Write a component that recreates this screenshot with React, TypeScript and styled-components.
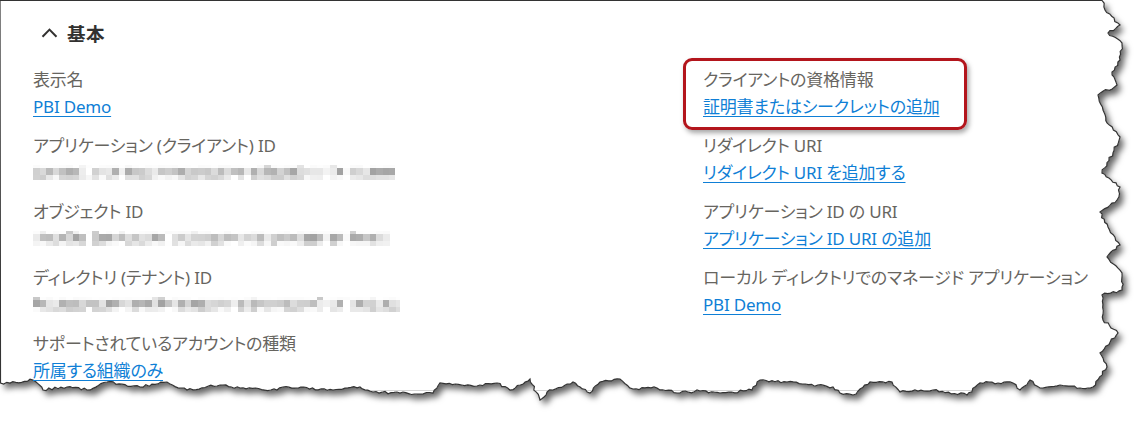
import React from 'react'
import styled, {createGlobalStyle} from 'styled-components'

const GlobalStyle = createGlobalStyle`
  html, body {
    margin: 0;
    padding: 0;
    background: #ffffff;
  }
  body {
    font-family: "Noto Sans", "Noto Sans CJK JP", sans-serif;
  }
`

// seeded random so the torn edge and mosaics stay the same every render
const makeRandom = (seed: number) => () => {
  seed = (seed * 16807) % 2147483647
  return (seed - 1) / 2147483646
}

const edgePoints: [number, number][] = [
  [0, 0.5], [1102, 0.5], [1105, 10], [1120, 25], [1108, 33], [1122, 43], [1120, 60], [1112, 72],
  [1117, 85], [1098, 95], [1103, 110], [1107, 123], [1120, 137], [1113, 153], [1102, 173],
  [1120, 187], [1117, 200], [1100, 212], [1108, 227], [1120, 245], [1107, 257], [1122, 273],
  [1122, 290], [1102, 295], [1103, 320], [1118, 333], [1100, 353], [1107, 367], [1093, 387],
  [1088, 388], [1080, 388], [1060, 385], [1040, 388], [1030, 380], [1020, 390], [1013, 383],
  [980, 383], [967, 395], [933, 390], [900, 392], [892, 382], [870, 382], [853, 395], [840, 393],
  [833, 387], [787, 382], [760, 380], [752, 390], [720, 393], [700, 391], [677, 393], [657, 388],
  [633, 389], [620, 379], [600, 382], [590, 393], [573, 382], [547, 392], [540, 400], [530, 379],
  [510, 390], [497, 383], [477, 386], [440, 383], [433, 393], [420, 394], [400, 393], [373, 392],
  [360, 387], [333, 390], [283, 387], [277, 390], [240, 388], [220, 385], [187, 390], [167, 382],
  [140, 387], [107, 382], [87, 390], [67, 387], [43, 390], [33, 380], [10, 383], [0.5, 383],
]

const buildTornPath = () => {
  const rnd = makeRandom(42)
  const out: string[] = [`M${edgePoints[0][0]},${edgePoints[0][1]}`, `L${edgePoints[1][0]},${edgePoints[1][1]}`]
  for (let i = 1; i < edgePoints.length - 1; i++) {
    const [x1, y1] = edgePoints[i]
    const [x2, y2] = edgePoints[i + 1]
    const len = Math.hypot(x2 - x1, y2 - y1)
    const steps = Math.max(1, Math.round(len / 3))
    const nx = -(y2 - y1) / (len || 1)
    const ny = (x2 - x1) / (len || 1)
    for (let s = 1; s <= steps; s++) {
      const t = s / steps
      const j = s === steps ? 0 : (rnd() - 0.5) * 2.6
      out.push(`L${(x1 + (x2 - x1) * t + nx * j).toFixed(1)},${(y1 + (y2 - y1) * t + ny * j).toFixed(1)}`)
    }
  }
  out.push('Z')
  return out.join(' ')
}

const tornPath = buildTornPath()

const Screen = styled.div`
  position: relative;
  width: 1145px;
  height: 421px;
  overflow: hidden;
  background: #ffffff;
`

const PaperShape = styled.svg`
  position: absolute;
  left: 0;
  top: 0;
  z-index: 0;
`

const Content = styled.div`
  position: relative;
  z-index: 1;
  padding: 20px 0 0 33px;
`

const SectionHeader = styled.div`
  display: flex;
  align-items: center;
  gap: 9px;
  height: 26px;
  margin-left: 8px;
  font-family: "Noto Sans CJK JP", sans-serif;
  font-size: 18.5px;
  font-weight: 700;
  color: #323130;
  letter-spacing: 0.6px;
`

const Columns = styled.div`
  display: grid;
  grid-template-columns: 670px 1fr;
  margin-top: 20px;
`

const Column = styled.div`
  display: flex;
  flex-direction: column;
  gap: 12px;
`

const Field = styled.div<{$highlighted?: boolean}>`
  position: relative;
  width: fit-content;
  display: flex;
  flex-direction: column;

  ${p => p.$highlighted && `
    &::before {
      content: '';
      position: absolute;
      top: -8px;
      bottom: -10px;
      left: -20px;
      right: -28px;
      border: 3px solid #b3151c;
      border-radius: 9px;
      box-shadow: 2px 3px 5px rgba(0, 0, 0, 0.35);
      pointer-events: none;
    }
  `}
`

const Label = styled.div`
  font-size: 17px;
  line-height: 27px;
  color: #67655f;
  letter-spacing: -0.2px;
  font-feature-settings: "palt";
  white-space: nowrap;
`

const Link = styled.a`
  font-size: 17px;
  line-height: 27px;
  color: #0f7fd6;
  letter-spacing: -0.2px;
  text-decoration: underline;
  text-underline-offset: 3px;
  text-decoration-thickness: 1px;
  font-feature-settings: "palt";
  white-space: nowrap;
  cursor: pointer;
`

const MaskedValue = styled.div`
  height: 27px;
  display: flex;
  align-items: center;
`

const ChevronUp = () => (
  <svg width="17" height="10" viewBox="0 0 17 10">
    <path d="M1.5 8.8 L8.5 1.6 L15.5 8.8" fill="none" stroke="#323130" strokeWidth="2" />
  </svg>
)

// pixelated (blurred) GUID
const Mosaic = ({seed, width}: {seed: number; width: number}) => {
  const rnd = makeRandom(seed)
  const cell = 6.6
  const cols = Math.round(width / cell)
  const rows = [
    {y: 0, h: 3, lo: 200, hi: 255, sparse: true},
    {y: 3, h: 7, lo: 160, hi: 238, sparse: false},
    {y: 10, h: 5, lo: 205, hi: 250, sparse: false},
  ]
  const rects: React.ReactNode[] = []
  rows.forEach((r, ri) => {
    for (let c = 0; c < cols; c++) {
      const gap = c % 12 === 8 || c % 17 === 13
      let v = r.lo + rnd() * (r.hi - r.lo)
      if (gap) v = Math.min(255, v + 30)
      if (r.sparse && rnd() > 0.15) v = 250 + rnd() * 5
      const g = Math.round(v)
      rects.push(
        <rect key={`${ri}-${c}`} x={c * cell} y={r.y} width={cell + 0.2} height={r.h} fill={`rgb(${g},${g},${g})`} />
      )
    }
  })
  return (
    <svg width={width} height={15} viewBox={`0 0 ${width} 15`} shapeRendering="crispEdges">
      {rects}
    </svg>
  )
}

type Item = {label: string; link?: string; masked?: {seed: number; width: number}; highlighted?: boolean}

const leftItems: Item[] = [
  {label: '表示名', link: 'PBI Demo'},
  {label: 'アプリケーション (クライアント) ID', masked: {seed: 7, width: 362}},
  {label: 'オブジェクト ID', masked: {seed: 19, width: 358}},
  {label: 'ディレクトリ (テナント) ID', masked: {seed: 31, width: 367}},
  {label: 'サポートされているアカウントの種類', link: '所属する組織のみ'},
]

const rightItems: Item[] = [
  {label: 'クライアントの資格情報', link: '証明書またはシークレットの追加', highlighted: true},
  {label: 'リダイレクト URI', link: 'リダイレクト URI を追加する'},
  {label: 'アプリケーション ID の URI', link: 'アプリケーション ID URI の追加'},
  {label: 'ローカル ディレクトリでのマネージド アプリケーション', link: 'PBI Demo'},
]

const renderItem = (item: Item) => (
  <Field key={item.label} $highlighted={item.highlighted}>
    <Label>{item.label}</Label>
    {item.link && <Link>{item.link}</Link>}
    {item.masked && (
      <MaskedValue>
        <Mosaic seed={item.masked.seed} width={item.masked.width} />
      </MaskedValue>
    )}
  </Field>
)

const App = () => {
  return (
    <>
      <GlobalStyle />
      <Screen>
        <PaperShape width="1145" height="421" viewBox="0 0 1145 421">
          <defs>
            <filter id="tornShadow" x="-5%" y="-5%" width="115%" height="125%">
              <feDropShadow dx="4" dy="5" stdDeviation="3" floodColor="#000" floodOpacity="0.6" />
            </filter>
            <clipPath id="paperClip">
              <path d={tornPath} />
            </clipPath>
          </defs>
          <path d={tornPath} fill="#ffffff" filter="url(#tornShadow)" />
          <line x1="0" y1="390.5" x2="1145" y2="390.5" stroke="#d6d6d6" strokeWidth="1" clipPath="url(#paperClip)" />
          <path d={tornPath} fill="none" stroke="#333333" strokeWidth="1.2" />
        </PaperShape>
        <Content>
          <SectionHeader>
            <ChevronUp />
            <span>基本</span>
          </SectionHeader>
          <Columns>
            <Column>{leftItems.map(renderItem)}</Column>
            <Column>{rightItems.map(renderItem)}</Column>
          </Columns>
        </Content>
      </Screen>
    </>
  )
}

export default App
